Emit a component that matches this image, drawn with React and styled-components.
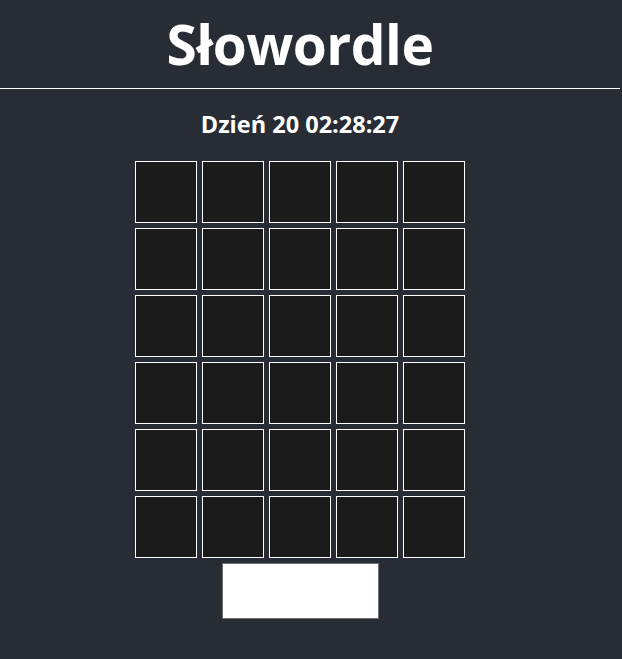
import React from 'react';
import styled, { createGlobalStyle } from 'styled-components';

const GlobalStyle = createGlobalStyle`
  html, body {
    margin: 0;
    padding: 0;
    background: #282c34;
    overflow: hidden;
  }
  body {
    font-family: 'Open Sans', 'Noto Sans', sans-serif;
    color: #ffffff;
  }
`;

const Page = styled.div`
  width: 600px;
  min-height: 659px;
  display: flex;
  flex-direction: column;
  align-items: center;
`;

const Header = styled.header`
  align-self: flex-start;
  width: 620px;
  height: 89px;
  border-bottom: 1px solid #ffffff;
  display: flex;
  justify-content: center;
  padding-right: 20px;
  box-sizing: border-box;
`;

const Title = styled.h1`
  margin: 0;
  padding-top: 11px;
  font-size: 55px;
  font-weight: 700;
  line-height: 66px;
  letter-spacing: -0.5px;
`;

const Clock = styled.div`
  margin-top: 20px;
  font-size: 23.5px;
  font-weight: 700;
  line-height: 30px;
`;

const Board = styled.div`
  margin-top: 22px;
  display: grid;
  grid-template-columns: repeat(5, 62px);
  grid-auto-rows: 62px;
  gap: 5px;
`;

const Tile = styled.div`
  box-sizing: border-box;
  border: 1px solid #ffffff;
  background: ${p => (p.$filled ? '#3a3a3c' : '#1b1b1b')};
`;

const SubmitButton = styled.button`
  margin-top: 5px;
  width: 157px;
  height: 56px;
  background: #ffffff;
  border: 1px solid #6f6f6f;
  border-radius: 0;
  padding: 0;
`;

const ROWS = 6;
const COLS = 5;

export default function App() {
  const tiles = [];
  for (let r = 0; r < ROWS; r++) {
    for (let c = 0; c < COLS; c++) {
      tiles.push(<Tile key={`${r}-${c}`} />);
    }
  }

  return (
    <>
      <GlobalStyle />
      <Page>
        <Header>
          <Title>Słowordle</Title>
        </Header>
        <Clock>Dzień 20 02:28:27</Clock>
        <Board>{tiles}</Board>
        <SubmitButton type="button" aria-label="Zatwierdź" />
      </Page>
    </>
  );
}
